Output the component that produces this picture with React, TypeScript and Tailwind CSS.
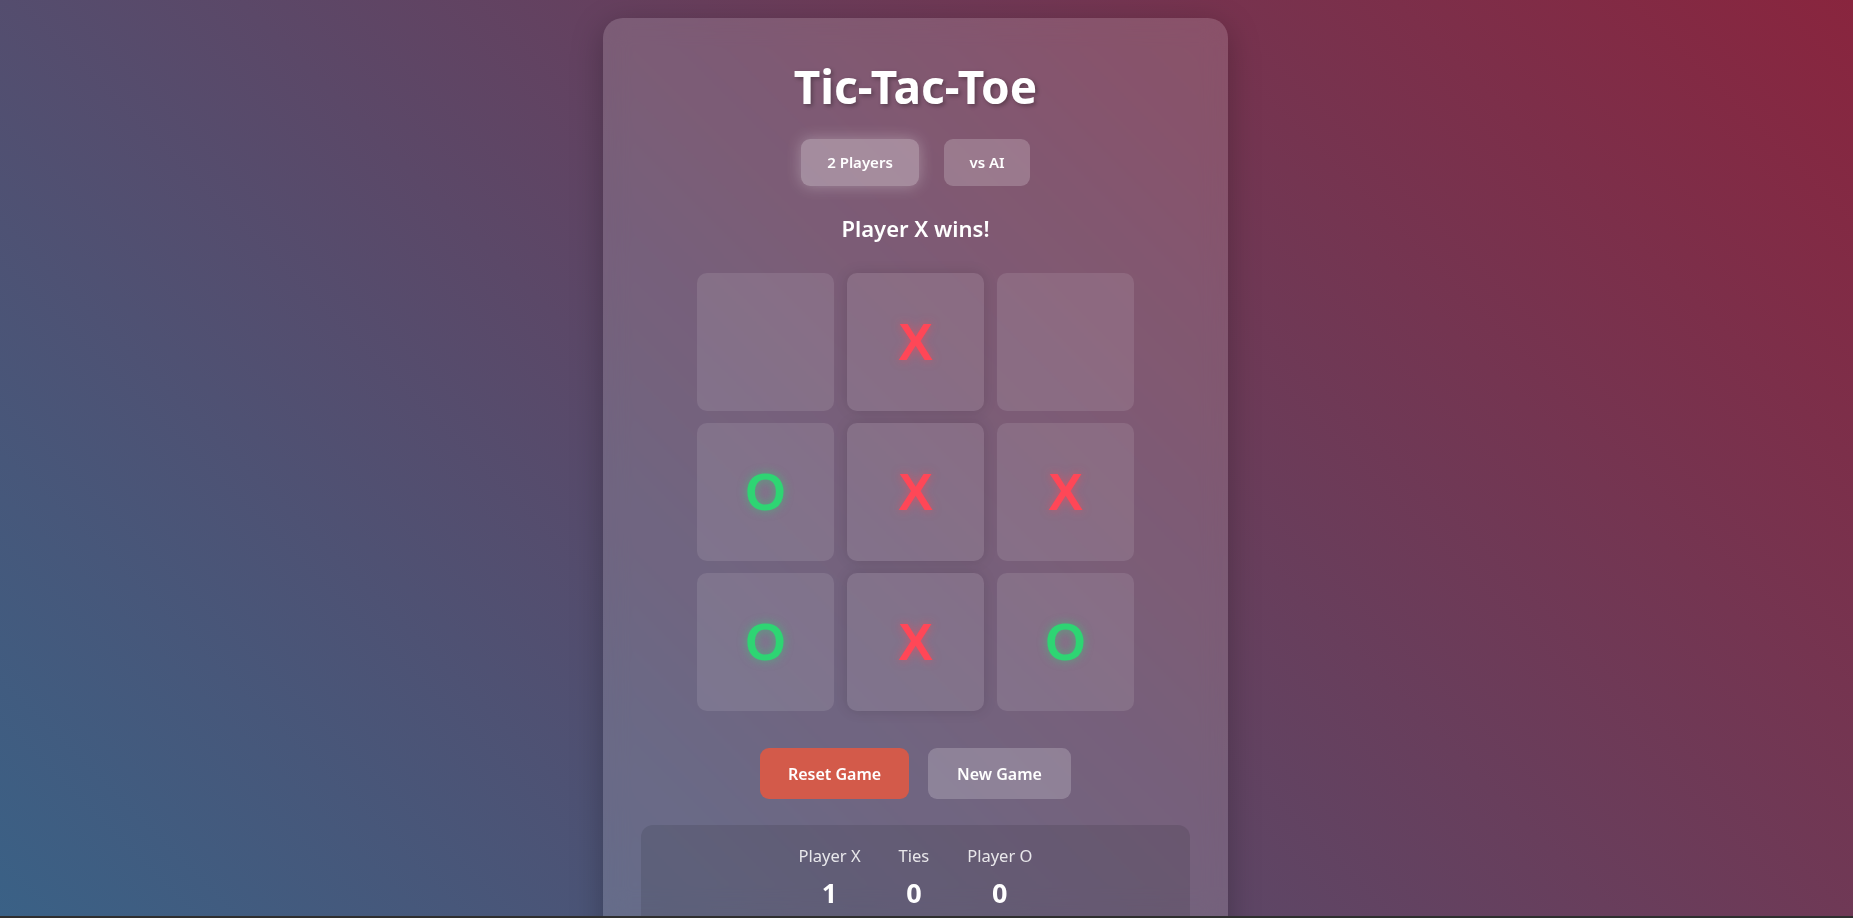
const cells = ["", "X", "", "O", "X", "X", "O", "X", "O"];
const winLine = [1, 4, 7];

const scores = [
  { label: "Player X", value: 1 },
  { label: "Ties", value: 0 },
  { label: "Player O", value: 0 },
];

function Cell({ mark, win }: { mark: string; win: boolean }) {
  return (
    <div
      className={`flex h-[138px] w-[137px] items-center justify-center rounded-[10px] bg-white/10 font-['Liberation_Sans',Arial,sans-serif] text-[52px] font-bold leading-none ${
        win ? "shadow-[0_0_14px_rgba(0,0,0,0.12)]" : ""
      } ${
        mark === "X"
          ? "text-[#ff4757] [text-shadow:0_0_10px_rgba(255,71,87,0.55)]"
          : "text-[#2ed573] [text-shadow:0_0_10px_rgba(46,213,115,0.55)]"
      }`}
    >
      {mark}
    </div>
  );
}

export default function App() {
  return (
    <div className="flex h-[918px] flex-col overflow-hidden">
      <div className="flex min-h-0 flex-1 justify-center overflow-hidden bg-[linear-gradient(45deg,#3a6186,#89253e)] pr-[22px] pt-[18px] font-['Noto_Sans','Open_Sans',sans-serif] text-white">
        {/* main card — runs past the bottom of the window */}
        <div className="flex h-[1000px] w-[625px] shrink-0 flex-col items-center rounded-[20px] bg-white/15 px-[38px] pt-[40px] shadow-[0_8px_32px_rgba(0,0,0,0.25)] backdrop-blur-md">
          <h1 className="text-[46px] font-bold leading-[56px] [text-shadow:2px_2px_4px_rgba(0,0,0,0.3)]">
            Tic-Tac-Toe
          </h1>

          <div className="mt-[25px] flex gap-[25px]">
            <button className="h-[47px] w-[118px] rounded-[9px] bg-white/30 text-[15px] font-semibold shadow-[0_0_15px_rgba(255,255,255,0.3)]">
              2 Players
            </button>
            <button className="h-[47px] w-[86px] rounded-[9px] bg-white/20 text-[15px] font-semibold">
              vs AI
            </button>
          </div>

          <div className="mt-[27px] text-[22px] font-semibold leading-[30px]">
            Player X wins!
          </div>

          <div className="mt-[30px] grid grid-cols-[repeat(3,137px)] gap-x-[13px] gap-y-[12px]">
            {cells.map((c, i) => (
              <Cell key={i} mark={c} win={winLine.includes(i)} />
            ))}
          </div>

          <div className="mt-[37px] flex gap-[19px]">
            <button className="h-[51px] w-[149px] rounded-[9px] bg-[#d35a4a] text-[16px] font-semibold">
              Reset Game
            </button>
            <button className="h-[51px] w-[143px] rounded-[9px] bg-white/20 text-[16px] font-semibold">
              New Game
            </button>
          </div>

          <div className="mt-[26px] flex h-[200px] w-full justify-center gap-[38px] rounded-[12px] bg-black/10 pt-[19px]">
            {scores.map((s) => (
              <div key={s.label} className="flex flex-col items-center">
                <span className="text-[16.5px] leading-[24px] text-white/85">{s.label}</span>
                <span className="mt-[8px] text-[27px] font-bold leading-[34px]">{s.value}</span>
              </div>
            ))}
          </div>
        </div>
      </div>
      <div className="h-[2px] bg-[#2f2f2f]" />
    </div>
  );
}
